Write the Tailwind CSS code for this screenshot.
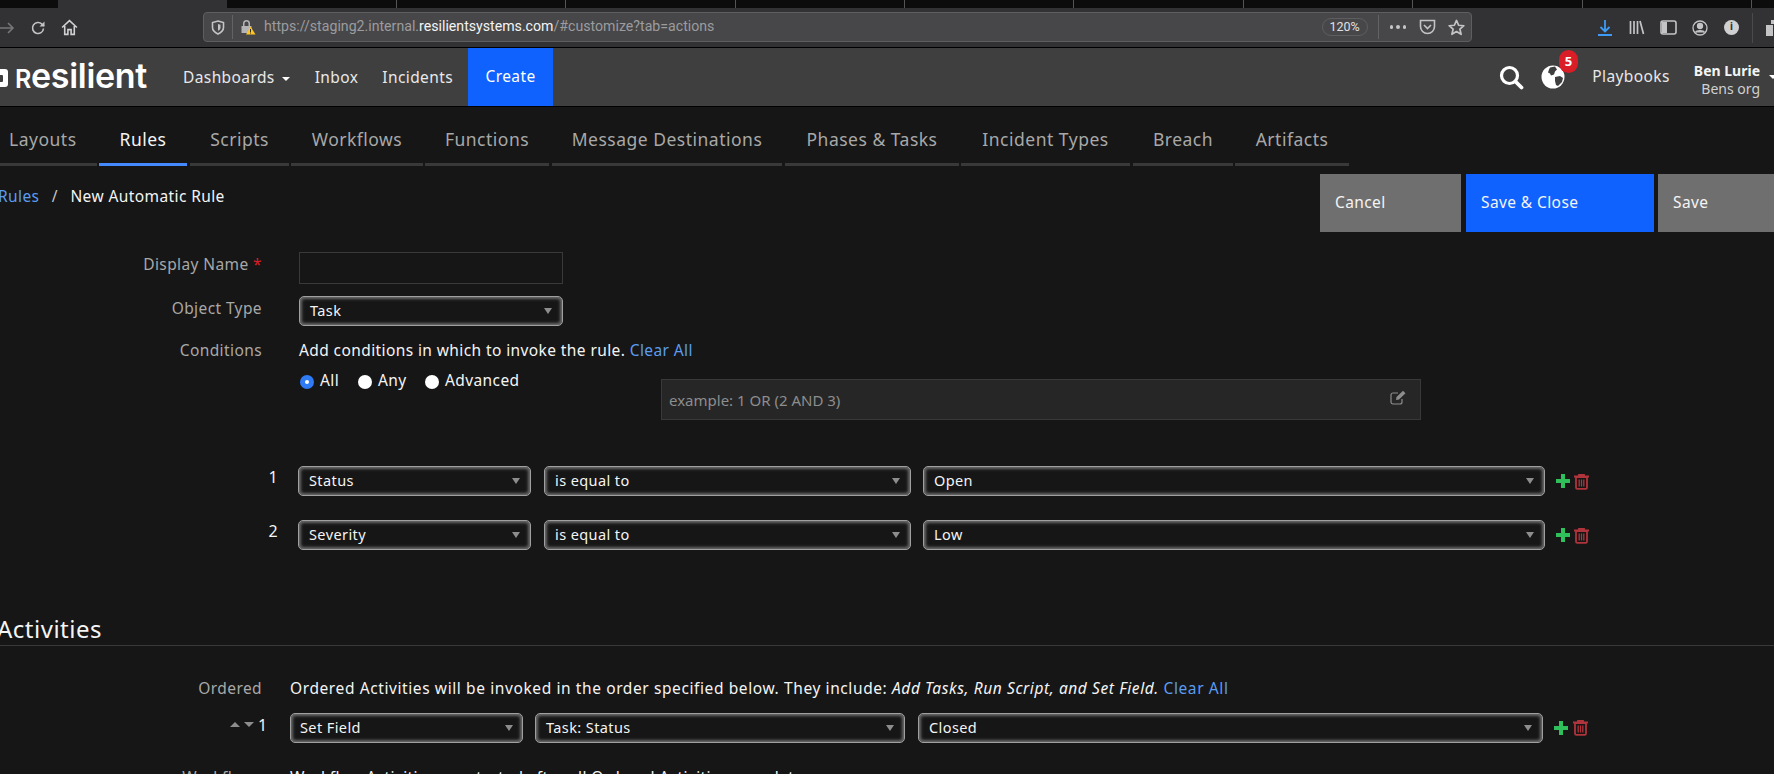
<!DOCTYPE html>
<html lang="en">
<head>
    <meta charset="UTF-8">
    <script src="https://cdn.jsdelivr.net/npm/@tailwindcss/browser@4"></script>
    <title>New Automatic Rule</title>
</head>
<body class="bg-[#161616] h-[774px] overflow-hidden font-['Noto_Sans',sans-serif] text-[#f4f4f4] text-[15.500px] tracking-[0.4px]">

    <!-- browser tab strip -->
    <div class="h-[8px] bg-[#0c0c0d] flex">
        <div class="ml-[58px] w-[169px] bg-[#323234]"></div>
        <div class="w-[170px] border-r border-[#555]"></div>
        <div class="w-[169px] border-r border-[#555]"></div>
        <div class="w-[170px] border-r border-[#555]"></div>
        <div class="w-[169px] border-r border-[#555]"></div>
        <div class="w-[169px] border-r border-[#555]"></div>
        <div class="w-[170px] border-r border-[#555]"></div>
        <div class="w-[169px] border-r border-[#555]"></div>
        <div class="w-[170px] border-r border-[#555]"></div>
        <div class="w-[169px] border-r border-[#555]"></div>
    </div>

    <!-- browser toolbar -->
    <div class="h-[39px] bg-[#323234] flex items-center overflow-hidden font-['Roboto',sans-serif] tracking-normal">
        <svg class="ml-[-1px] w-[16px] h-[16px] shrink-0" viewBox="0 0 16 16" fill="none" stroke="#77777a" stroke-width="1.6"><path d="M0 8h14M9 3l5 5-5 5"/></svg>
        <svg class="ml-[15px] w-[16px] h-[16px] shrink-0" viewBox="0 0 16 16" fill="none" stroke="#c4c4c6" stroke-width="1.6"><path d="M13.5 8.5a5.5 5.5 0 1 1-1.6-4.4L14 6"/><path d="M14.5 1.5v5h-5z" fill="#c4c4c6" stroke="none"/></svg>
        <svg class="ml-[15px] w-[17px] h-[17px] shrink-0" viewBox="0 0 16 16" fill="none" stroke="#d0d0d2" stroke-width="1.5"><path d="M1 8l7-6.5L15 8M3.5 6.5V14.5h3V10h3v4.500h3V6.500"/></svg>

        <div class="ml-[125px] w-[1269px] shrink-0 h-[30px] mt-[-1px] bg-[#474749] border border-[#5e5e60] rounded-[4px] flex items-center">
            <svg class="ml-[7px] w-[14px] h-[15px]" viewBox="0 0 14 15" fill="none" stroke="#c4c4c6" stroke-width="1.6"><path d="M7 1l5.500 1.500v5c0 3-2.500 5-5.500 6.500-3-1.500-5.500-3.500-5.500-6.500v-5z"/><path d="M7 4l2.500.7v3c0 1.300-1 2.200-2.500 3z" fill="#c4c4c6" stroke="none"/></svg>
            <div class="ml-[7px] w-px h-[24px] bg-[#636365]"></div>
            <svg class="ml-[8px] w-[15px] h-[16px]" viewBox="0 0 15 16"><path d="M2 7V4.500a3.500 3.500 0 0 1 7 0V7h1.500v7H.5V7zM3.500 7h4V4.500a2 2 0 0 0-4 0z" fill="#b4b4b6"/><path d="M9.500 7.500l5 8h-9.500z" fill="#ffc526"/><path d="M9.100 10h.9v3h-.9zM9.100 13.600h.9v.9h-.9z" fill="#222"/></svg>
            <span class="ml-[8px] text-[14.150px] text-[#9c9c9e]">https://staging2.internal.<span class="text-[#f4f4f4]">resilientsystems.com</span>/#customize?tab=actions</span>
            <div class="ml-auto w-[46px] h-[18px] rounded-full border border-[#5e5e60] text-[12.500px] text-[#e0e0e2] flex items-center justify-center">120%</div>
            <div class="ml-[10px] w-px h-[24px] bg-[#636365]"></div>
            <div class="ml-[11px] flex gap-[3px]">
                <div class="w-[3.500px] h-[3.500px] rounded-full bg-[#c4c4c6]"></div>
                <div class="w-[3.500px] h-[3.500px] rounded-full bg-[#c4c4c6]"></div>
                <div class="w-[3.500px] h-[3.500px] rounded-full bg-[#c4c4c6]"></div>
            </div>
            <svg class="ml-[13px] w-[17px] h-[16px]" viewBox="0 0 17 16" fill="none" stroke="#c4c4c6" stroke-width="1.600"><path d="M1.500 1.500h14v6a7 7 0 0 1-14 0z"/><path d="M5 6l3.500 3.500L12 6"/></svg>
            <svg class="ml-[12px] mr-[6px] w-[17px] h-[17px]" viewBox="0 0 24 24" fill="none" stroke="#c4c4c6" stroke-width="2.400" stroke-linejoin="round"><path d="M12 2l3 6.800 7.400.7-5.600 4.900 1.700 7.200L12 17.800 5.500 21.600l1.700-7.200L1.600 9.500 9 8.800z"/></svg>
        </div>

        <svg class="ml-[126px] w-[14px] h-[16px] shrink-0" viewBox="0 0 14 16" fill="none" stroke="#3d9bf5" stroke-width="1.800"><path d="M7 0v11M2.500 7L7 11.500 11.500 7M0 15h14"/></svg>
        <svg class="ml-[17px] w-[16px] h-[15px] shrink-0" viewBox="0 0 16 15" fill="none" stroke="#c4c4c6" stroke-width="1.700"><path d="M1.500 1v13M5 1v13M8.500 1v13M11 1l3.500 13"/></svg>
        <svg class="ml-[15px] w-[17px] h-[15px] shrink-0" viewBox="0 0 17 15" fill="none" stroke="#c4c4c6" stroke-width="1.600"><rect x="1" y="1" width="15" height="13" rx="2"/><path d="M2 2h5v11H2z" fill="#c4c4c6" stroke="none"/></svg>
        <svg class="ml-[15px] w-[16px] h-[16px] shrink-0" viewBox="0 0 16 16" fill="none" stroke="#c4c4c6" stroke-width="1.300"><circle cx="8" cy="8" r="7"/><circle cx="8" cy="6" r="2.500" fill="#c4c4c6"/><path d="M3.500 12.500c1-2.500 8-2.500 9 0" fill="#c4c4c6"/></svg>
        <div class="ml-[16px] w-[15px] h-[15px] shrink-0 rounded-full bg-[#d0d0d2] text-[#323234] text-[11px] font-bold flex items-center justify-center">i</div>
        <div class="ml-[13px] w-px h-[30px] shrink-0 bg-[#4a4a4c]"></div>
        <svg class="ml-[13px] w-[16px] h-[16px] shrink-0" viewBox="0 0 16 16" fill="#c4c4c6"><path d="M5 0h6v4H5zM0 5h7v11H0zM9 5h7v11H9z"/></svg>
    </div>

    <!-- app header -->
    <header class="h-[60px] bg-[#3f3f3f] border-y border-black flex items-stretch">
        <div class="flex items-center w-[147px]">
            <div class="ml-[-10px] shrink-0 w-[18px] h-[18px] bg-white rounded-[3px] flex items-center justify-center mt-[2px]"><div class="w-[7px] h-[7px] bg-[#3f3f3f] rounded-[1px]"></div></div>
            <span class="ml-[7px] font-['Inter',sans-serif] font-semibold text-[34px] leading-none tracking-[-0.3px] text-white mt-[-3px]"><span class="text-[25px]">R</span>esilient</span>
        </div>
        <nav class="ml-[36px] flex items-center text-[#e8e8e8] mt-[1px]">
            <span>Dashboards</span>
            <span class="ml-[7px] w-0 h-0 border-x-[4px] border-x-transparent border-t-[4px] border-t-white mt-[2px]"></span>
            <span class="ml-[25px]">Inbox</span>
            <span class="ml-[24px]">Incidents</span>
        </nav>
        <a class="ml-[15px] w-[85px] bg-[#0f62fe] text-white flex items-center justify-center">Create</a>
        <div class="ml-auto flex items-center">
            <svg class="w-[26px] h-[26px]" viewBox="0 0 26 26" fill="none" stroke="white"><circle cx="11.500" cy="11.500" r="8" stroke-width="3.200"/><path d="M17.500 17.500l6 6" stroke-width="3.800" stroke-linecap="round"/></svg>
            <div class="relative ml-[17px] w-[24px] h-[24px]">
                <svg class="w-[24px] h-[24px]" viewBox="0 0 24 24"><circle cx="12" cy="12" r="11.500" fill="white"/><path d="M9 2.500l5-1 2 3-2 2-1 3-3 1-1-2-2-1 1-3zM14 12l5-1 3 2-1 4-4 4-2-1-1-4z" fill="#3f3f3f"/></svg>
                <div class="absolute top-[-15px] right-[-13px] w-[19px] h-[23px] rounded-full bg-[#da1e28] text-white text-[13px] font-bold flex items-center justify-center">5</div>
            </div>
            <span class="ml-[27px] text-[#e8e8e8]">Playbooks</span>
            <div class="ml-[24px] text-right leading-[18px] text-[14px] tracking-normal mt-[6px]">
                <div class="font-bold">Ben Lurie</div>
                <div class="text-[#d0d0d0]">Bens org</div>
            </div>
            <span class="ml-[9px] mr-[-3px] w-0 h-0 border-x-[4px] border-x-transparent border-t-[4px] border-t-white"></span>
        </div>
    </header>

    <!-- tabs -->
    <div class="flex h-[59px] text-[17.500px] text-[#a8a8a8] tracking-[0.5px]">
        <div class="w-[97px] pl-[9px] pt-[19px] border-b-[3px] border-[#393939] mr-[2px]">Layouts</div>
        <div class="w-[88px] text-center text-[#f4f4f4] pt-[19px] border-b-[3px] border-[#4589ff] mr-[3px]">Rules</div>
        <div class="w-[99px] text-center pt-[19px] border-b-[3px] border-[#393939] mr-[2px]">Scripts</div>
        <div class="w-[132px] text-center pt-[19px] border-b-[3px] border-[#393939] mr-[2px]">Workflows</div>
        <div class="w-[124px] text-center pt-[19px] border-b-[3px] border-[#393939] mr-[3px]">Functions</div>
        <div class="w-[230px] text-center pt-[19px] border-b-[3px] border-[#393939] mr-[3px]">Message Destinations</div>
        <div class="w-[174px] text-center pt-[19px] border-b-[3px] border-[#393939] mr-[2px]">Phases &amp; Tasks</div>
        <div class="w-[169px] text-center pt-[19px] border-b-[3px] border-[#393939] mr-[3px]">Incident Types</div>
        <div class="w-[100px] text-center pt-[19px] border-b-[3px] border-[#393939] mr-[2px]">Breach</div>
        <div class="w-[114px] text-center pt-[19px] border-b-[3px] border-[#393939]">Artifacts</div>
    </div>

    <!-- breadcrumb and actions -->
    <div class="mt-[8px] h-[58px] flex">
        <div class="ml-[-2px] mt-[11px]">
            <a class="text-[#5b9cf0]">Rules</a>
            <span class="ml-[8px] text-[#c6c6c6]">/</span>
            <span class="ml-[8px]">New Automatic Rule</span>
        </div>
        <button class="ml-auto w-[141px] bg-[#6f6f6f] text-left pl-[15px]">Cancel</button>
        <button class="ml-[5px] w-[188px] bg-[#0f62fe] text-left pl-[15px]">Save &amp; Close</button>
        <button class="ml-[4px] w-[116px] bg-[#6f6f6f] text-left pl-[15px]">Save</button>
    </div>

    <!-- rule form -->
    <div class="mt-[20px] flex h-[32px]">
        <label class="w-[262px] text-right text-[#a8a8a8] mt-[1px]">Display Name <span class="text-[#da1e28]">*</span></label>
        <input class="ml-[37px] w-[264px] h-[32px] border border-[#393939] bg-[#161616]">
    </div>

    <div class="mt-[12px] flex">
        <label class="w-[262px] text-right text-[#a8a8a8] mt-[1px]">Object Type</label>
        <div class="ml-[37px] w-[264px] h-[30px] rounded-[5px] border border-[#a0a0a0] shadow-[inset_0_0_3px_2px_#6a6a6a] flex items-center justify-between px-[10px] text-[14.500px]">Task<span class="w-0 h-0 border-x-[4.500px] border-x-transparent border-t-[6px] border-t-[#8d8d8d]"></span></div>
    </div>

    <div class="mt-[13px] flex">
        <label class="w-[262px] text-right text-[#a8a8a8]">Conditions</label>
        <div class="ml-[37px]">Add conditions in which to invoke the rule. <a class="text-[#5b9cf0]">Clear All</a></div>
    </div>

    <div class="flex mt-[6px] pl-[300px] h-[54px]">
        <div class="flex items-start gap-[6px] mt-[1px] w-[352px]">
            <span class="mt-[6px] w-[14px] h-[14px] rounded-full bg-[#2f7bf6] flex items-center justify-center"><span class="w-[4px] h-[4px] rounded-full bg-white"></span></span>
            <span class="w-[32px]">All</span>
            <span class="mt-[6px] w-[14px] h-[14px] rounded-full bg-white"></span>
            <span class="w-[41px]">Any</span>
            <span class="mt-[6px] w-[14px] h-[14px] rounded-full bg-white"></span>
            <span>Advanced</span>
        </div>
        <div class="ml-[9px] mt-[11px] w-[760px] h-[41px] bg-[#262626] border border-[#393939] flex items-center justify-between pl-[7px] pr-[13px] text-[#8d8d8d] text-[15px] tracking-normal">
            example: 1 OR (2 AND 3)
            <svg class="w-[17px] h-[15px] mt-[-5px]" viewBox="0 0 17 15" fill="none" stroke="#8d8d8d" stroke-width="1.200"><path d="M12 9v3a2 2 0 0 1-2 2H3a2 2 0 0 1-2-2V5a2 2 0 0 1 2-2h5"/><path d="M6 10l.5-3L13 .8l2.500 2.400L9 9.500z" fill="#8d8d8d" stroke="none"/></svg>
        </div>
    </div>

    <!-- conditions -->
    <div class="mt-[44px] flex items-center h-[30px]">
        <span class="w-[278px] text-right text-[16px] mt-[-9px]">1</span>
        <div class="ml-[20px] w-[233px] h-[30px] rounded-[5px] border border-[#a0a0a0] shadow-[inset_0_0_3px_2px_#6a6a6a] flex items-center justify-between px-[10px] text-[14.500px]">Status<span class="w-0 h-0 border-x-[4.500px] border-x-transparent border-t-[6px] border-t-[#8d8d8d]"></span></div>
        <div class="ml-[13px] w-[367px] h-[30px] rounded-[5px] border border-[#a0a0a0] shadow-[inset_0_0_3px_2px_#6a6a6a] flex items-center justify-between px-[10px] text-[14.500px]">is equal to<span class="w-0 h-0 border-x-[4.500px] border-x-transparent border-t-[6px] border-t-[#8d8d8d]"></span></div>
        <div class="ml-[12px] w-[622px] h-[30px] rounded-[5px] border border-[#a0a0a0] shadow-[inset_0_0_3px_2px_#6a6a6a] flex items-center justify-between px-[10px] text-[14.500px]">Open<span class="w-0 h-0 border-x-[4.500px] border-x-transparent border-t-[6px] border-t-[#8d8d8d]"></span></div>
        <svg class="ml-[11px] w-[14px] h-[14px]" viewBox="0 0 14 14" fill="#2fbf5b"><path d="M5 0h4v5h5v4H9v5H5V9H0V5h5z"/></svg>
        <svg class="ml-[4px] w-[15px] h-[17px]" viewBox="0 0 15 16" fill="none" stroke="#b0343c" stroke-width="1.800"><path d="M0 3h15M5 3V1.500h5V3" /><path d="M2 3.500h11v10.500a1.300 1.300 0 0 1-1.300 1.300H3.300A1.300 1.300 0 0 1 2 14z"/><path d="M5.200 6v7M7.500 6v7M9.800 6v7" stroke-width="1.300"/></svg>
    </div>

    <div class="mt-[24px] flex items-center h-[30px]">
        <span class="w-[278px] text-right text-[16px] mt-[-9px]">2</span>
        <div class="ml-[20px] w-[233px] h-[30px] rounded-[5px] border border-[#a0a0a0] shadow-[inset_0_0_3px_2px_#6a6a6a] flex items-center justify-between px-[10px] text-[14.500px]">Severity<span class="w-0 h-0 border-x-[4.500px] border-x-transparent border-t-[6px] border-t-[#8d8d8d]"></span></div>
        <div class="ml-[13px] w-[367px] h-[30px] rounded-[5px] border border-[#a0a0a0] shadow-[inset_0_0_3px_2px_#6a6a6a] flex items-center justify-between px-[10px] text-[14.500px]">is equal to<span class="w-0 h-0 border-x-[4.500px] border-x-transparent border-t-[6px] border-t-[#8d8d8d]"></span></div>
        <div class="ml-[12px] w-[622px] h-[30px] rounded-[5px] border border-[#a0a0a0] shadow-[inset_0_0_3px_2px_#6a6a6a] flex items-center justify-between px-[10px] text-[14.500px]">Low<span class="w-0 h-0 border-x-[4.500px] border-x-transparent border-t-[6px] border-t-[#8d8d8d]"></span></div>
        <svg class="ml-[11px] w-[14px] h-[14px]" viewBox="0 0 14 14" fill="#2fbf5b"><path d="M5 0h4v5h5v4H9v5H5V9H0V5h5z"/></svg>
        <svg class="ml-[4px] w-[15px] h-[17px]" viewBox="0 0 15 16" fill="none" stroke="#b0343c" stroke-width="1.800"><path d="M0 3h15M5 3V1.500h5V3" /><path d="M2 3.500h11v10.500a1.300 1.300 0 0 1-1.300 1.300H3.300A1.300 1.300 0 0 1 2 14z"/><path d="M5.200 6v7M7.500 6v7M9.800 6v7" stroke-width="1.300"/></svg>
    </div>

    <!-- activities -->
    <h2 class="mt-[63px] ml-[-3px] text-[24px] leading-[32px] tracking-[0.5px]">Activities</h2>
    <hr class="border-[#393939]">

    <div class="mt-[31px] flex">
        <label class="w-[262px] text-right text-[#a8a8a8]">Ordered</label>
        <div class="ml-[28px] tracking-[0.6px]">Ordered Activities will be invoked in the order specified below. They include: <i>Add Tasks, Run Script, and Set Field.</i> <a class="text-[#5b9cf0]">Clear All</a></div>
    </div>

    <div class="mt-[12px] flex items-center h-[30px]">
        <span class="w-[230px]"></span>
        <span class="w-0 h-0 border-x-[5px] border-x-transparent border-b-[5px] border-b-[#8d8d8d] mt-[-6px]"></span>
        <span class="ml-[4px] w-0 h-0 border-x-[5px] border-x-transparent border-t-[5px] border-t-[#8d8d8d] mt-[-6px]"></span>
        <span class="ml-[4px] text-[16px] mt-[-5px] w-[10px]">1</span>
        <div class="ml-[22px] w-[233px] h-[30px] rounded-[5px] border border-[#a0a0a0] shadow-[inset_0_0_3px_2px_#6a6a6a] flex items-center justify-between px-[9px] text-[14.500px]">Set Field<span class="w-0 h-0 border-x-[4.500px] border-x-transparent border-t-[6px] border-t-[#8d8d8d]"></span></div>
        <div class="ml-[12px] w-[370px] h-[30px] rounded-[5px] border border-[#a0a0a0] shadow-[inset_0_0_3px_2px_#6a6a6a] flex items-center justify-between px-[10px] text-[14.500px]">Task: Status<span class="w-0 h-0 border-x-[4.500px] border-x-transparent border-t-[6px] border-t-[#8d8d8d]"></span></div>
        <div class="ml-[13px] w-[625px] h-[30px] rounded-[5px] border border-[#a0a0a0] shadow-[inset_0_0_3px_2px_#6a6a6a] flex items-center justify-between px-[10px] text-[14.500px]">Closed<span class="w-0 h-0 border-x-[4.500px] border-x-transparent border-t-[6px] border-t-[#8d8d8d]"></span></div>
        <svg class="ml-[11px] w-[14px] h-[14px]" viewBox="0 0 14 14" fill="#2fbf5b"><path d="M5 0h4v5h5v4H9v5H5V9H0V5h5z"/></svg>
        <svg class="ml-[5px] w-[15px] h-[17px]" viewBox="0 0 15 16" fill="none" stroke="#b0343c" stroke-width="1.800"><path d="M0 3h15M5 3V1.500h5V3" /><path d="M2 3.500h11v10.500a1.300 1.300 0 0 1-1.300 1.300H3.300A1.300 1.300 0 0 1 2 14z"/><path d="M5.200 6v7M7.500 6v7M9.800 6v7" stroke-width="1.300"/></svg>
    </div>

    <div class="mt-[23px] flex">
        <label class="w-[262px] text-right text-[#a8a8a8]">Workflows</label>
        <div class="ml-[28px]">Workflow Activities are started after all Ordered Activities complete.</div>
    </div>
</body>
</html>
